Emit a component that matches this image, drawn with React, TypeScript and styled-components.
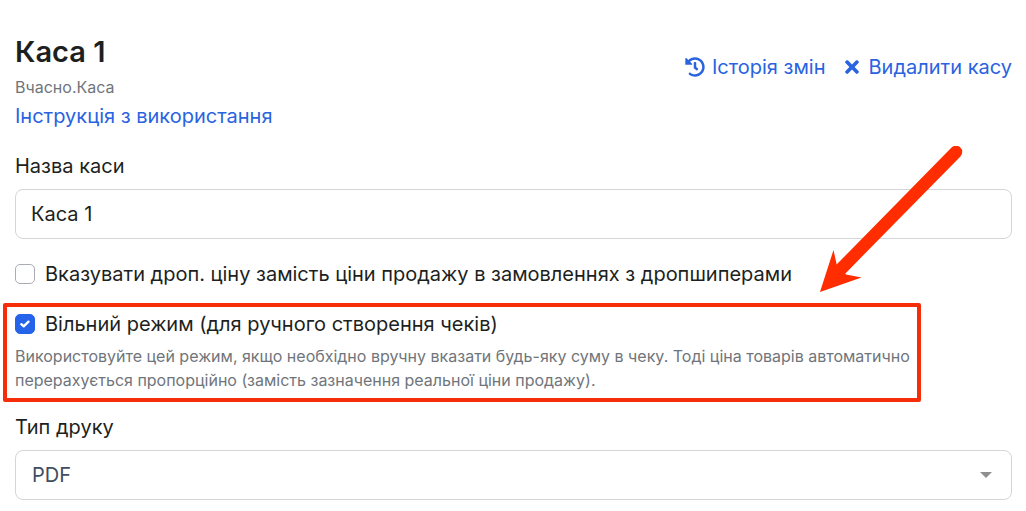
import React, { useState } from 'react';
import styled, { createGlobalStyle } from 'styled-components';
import { FaHistory, FaTimes } from 'react-icons/fa';

const GlobalStyle = createGlobalStyle`
  *, *::before, *::after { box-sizing: border-box; }
  body {
    margin: 0;
    background: #fff;
    color: #1d1f21;
    font-family: Inter, "Liberation Sans", sans-serif;
    font-size: 20px;
    line-height: 30px;
  }
`;

const Page = styled.main`
  display: flex;
  flex-direction: column;
  padding: 32px 14px 10px 15px;
`;

const Header = styled.header`
  display: flex;
  justify-content: space-between;
  align-items: flex-start;
`;

const Heading = styled.div`
  display: flex;
  flex-direction: column;
  align-items: flex-start;
`;

const Title = styled.h1`
  margin: 0;
  font-size: 29px;
  line-height: 40px;
  font-weight: 600;
`;

const Subtitle = styled.p`
  margin: 3px 0 2px;
  font-size: 16px;
  line-height: 24px;
  color: #70757b;
`;

const Link = styled.a`
  color: #2a63e0;
  text-decoration: none;
`;

const Actions = styled.div`
  display: flex;
  gap: 16px;
  padding-top: 20px;
`;

const Action = styled.button`
  display: flex;
  align-items: center;
  gap: 7px;
  padding: 0;
  border: 0;
  background: none;
  color: #2a63e0;
  font: inherit;
  cursor: pointer;
`;

const Field = styled.div`
  display: flex;
  flex-direction: column;
  gap: 8px;
  margin-top: ${(p: { $gap: number }) => p.$gap}px;
`;

const TextInput = styled.input`
  width: 100%;
  height: 50px;
  padding: 0 15px;
  border: 1px solid #d3d6d9;
  border-radius: 8px;
  background: #fff;
  color: inherit;
  font: inherit;
`;

const SelectWrap = styled.div`
  display: grid;
  align-items: center;
  > * { grid-area: 1 / 1; }
  > svg { justify-self: end; margin-right: 20px; pointer-events: none; }
`;

const Select = styled.select`
  appearance: none;
  width: 100%;
  height: 50px;
  padding: 0 16px;
  border: 1px solid #d3d6d9;
  border-radius: 8px;
  background: #fff;
  color: #414d60;
  font: inherit;
`;

const CheckLabel = styled.label`
  display: flex;
  align-items: center;
  gap: 10px;
`;

const CheckBox = styled.span`
  display: grid;
  place-items: center;
  > * { grid-area: 1 / 1; }
  > svg { pointer-events: none; }
`;

const CheckInput = styled.input`
  appearance: none;
  width: 20px;
  height: 20px;
  margin: 0;
  border: 1px solid #a9adb2;
  border-radius: 5px;
  background: #fff;
  &:checked { border-color: #2563eb; background: #2563eb; }
`;

const Options = styled.div`
  display: flex;
  flex-direction: column;
  gap: 14px;
  margin-top: 20px;
`;

const Highlight = styled.section`
  position: relative;
  max-width: 918px;
  margin-left: -12px;
  padding: 2px 2px 6px 8px;
  border: 4px solid #f52d08;
  border-radius: 2px;
`;

const Hint = styled.p`
  margin: 5px 0 0;
  font-size: 16px;
  line-height: 24px;
  color: #70757b;
`;

const Arrow = styled.svg`
  position: absolute;
  right: -49px;
  bottom: 100%;
  margin-bottom: 11px;
  pointer-events: none;
`;

function Check({ label, initial }: { label: string; initial: boolean }) {
  const [on, setOn] = useState(initial);
  return (
    <CheckLabel>
      <CheckBox>
        <CheckInput type="checkbox" checked={on} onChange={(e) => setOn(e.target.checked)} />
        {on && (
          <svg width="12" height="12" viewBox="0 0 12 12" fill="none" stroke="#fff" strokeWidth="2.4" strokeLinecap="round" strokeLinejoin="round" aria-hidden="true">
            <path d="M2.3 6.2 4.7 8.3 9.5 3.7" />
          </svg>
        )}
      </CheckBox>
      {label}
    </CheckLabel>
  );
}

export default function App() {
  const [name, setName] = useState('Каса 1');
  return (
    <>
      <GlobalStyle />
      <Page>
        <Header>
          <Heading>
            <Title>Каса 1</Title>
            <Subtitle>Вчасно.Каса</Subtitle>
            <Link href="#instruction">Інструкція з використання</Link>
          </Heading>
          <Actions>
            <Action type="button"><FaHistory size={20} aria-hidden="true" />Історія змін</Action>
            <Action type="button"><FaTimes size={20} aria-hidden="true" />Видалити касу</Action>
          </Actions>
        </Header>

        <Field $gap={20}>
          <label htmlFor="name">Назва каси</label>
          <TextInput id="name" value={name} onChange={(e) => setName(e.target.value)} />
        </Field>

        <Options>
          <Check label="Вказувати дроп. ціну замість ціни продажу в замовленнях з дропшиперами" initial={false} />
          <Highlight>
            <Check label="Вільний режим (для ручного створення чеків)" initial />
            <Hint>
              Використовуйте цей режим, якщо необхідно вручну вказати будь-яку суму в чеку. Тоді ціна товарів автоматично
              перерахується пропорційно (замість зазначення реальної ціни продажу).
            </Hint>
            <Arrow width="150" height="150" viewBox="816 146 150 150" aria-hidden="true">
              <path d="M956 152 840 270" stroke="#ff2d00" strokeWidth="12.5" strokeLinecap="round" />
              <path d="M820 292 833.500 250 837 266 846 274.500 861.500 277.500Z" fill="#ff2d00" />
            </Arrow>
          </Highlight>
        </Options>

        <Field $gap={10}>
          <label htmlFor="print">Тип друку</label>
          <SelectWrap>
            <Select id="print" defaultValue="pdf">
              <option value="pdf">PDF</option>
            </Select>
            <svg width="12" height="6" viewBox="0 0 12 6" aria-hidden="true">
              <path d="M0 0h12L6 6z" fill="#8f8f8f" />
            </svg>
          </SelectWrap>
        </Field>
      </Page>
    </>
  );
}
